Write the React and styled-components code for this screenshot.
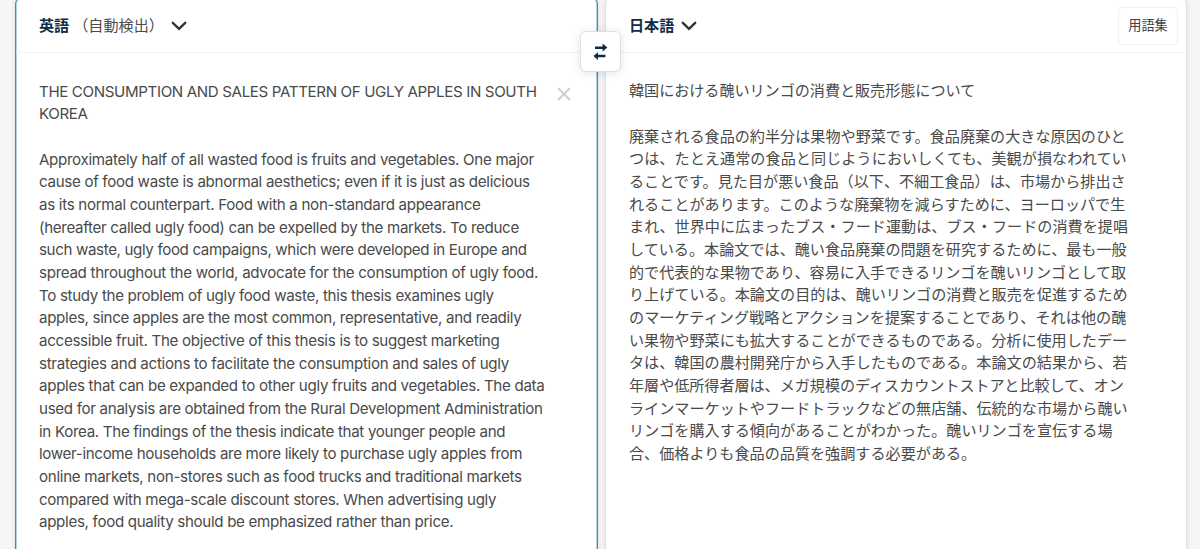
import React from 'react';

import styled, { createGlobalStyle } from "styled-components";

const GlobalStyle = createGlobalStyle`
  * {
    box-sizing: border-box;
  }

  html, body {
    margin: 0;
    height: 549px;
    overflow: hidden;
    background-color: #f6f6f6;
  }

  body {
    font-family: Inter, "Noto Sans CJK JP", sans-serif;
    color: #4a4a4a;
  }
`;

const Translator = styled.main`
  display: grid;
  grid-template-columns: 583px 582px;
  column-gap: 7px;
  height: 570px;
  margin: -4px 0 0 15px;
`;

const Panel = styled.section`
  position: relative;
  background-color: white;
  border: 1px solid ${({ $active }) => ($active ? "#3c8eb3" : "#dae1e8")};
  border-radius: 8px;
  box-shadow: ${({ $active }) => ($active ? "inset 0 0 0 1px rgba(60, 142, 179, 0.4), " : "")}0 1px 5px rgba(0, 43, 81, 0.12);
`;

const PanelHeader = styled.header`
  height: 56px;
  padding: 3px 8px 0 23px;
  display: flex;
  align-items: center;
  border-bottom: 1px solid #f0f1f2;
`;

const LanguageButton = styled.button`
  display: flex;
  align-items: center;
  padding: 0 0 5px;
  border: 0;
  background: transparent;
  font-family: "Noto Sans CJK JP", sans-serif;
  font-size: 15.12px;
  line-height: 22px;
  color: #4a4a4a;
  cursor: pointer;
`;

const LanguageName = styled.strong`
  font-weight: 700;
  color: #0f2b46;
`;

const DetectedLabel = styled.span`
  margin-left: 4px;
`;

const Chevron = styled.svg`
  width: 16px;
  height: 10px;
  margin: 5px 0 0 7px;
`;

const GlossaryButton = styled.button`
  width: 60px;
  height: 38px;
  margin-left: auto;
  padding: 0 0 3px;
  border: 1px solid #f0f1f3;
  border-radius: 3px;
  background-color: white;
  font-family: "Noto Sans CJK JP", sans-serif;
  font-size: 13.2px;
  color: #3a414c;
  cursor: pointer;
`;

const PanelBody = styled.div`
  display: flex;
  align-items: flex-start;
  justify-content: space-between;
  padding: ${({ $japanese }) => ($japanese ? 25.3 : 27.7)}px 26px 0 23px;
`;

const TextBlock = styled.div`
  font-family: ${({ $japanese }) => ($japanese ? '"Noto Sans CJK JP", sans-serif' : 'Inter, sans-serif')};
  font-size: 15.12px;
  line-height: 22.68px;
`;

const Line = styled.div`
  height: 22.68px;
  white-space: nowrap;
  letter-spacing: ${({ $tracking }) => $tracking || 0}px;
`;

const ClearButton = styled.button`
  display: flex;
  margin-top: 6px;
  padding: 0;
  border: 0;
  background: transparent;
  cursor: pointer;
`;

const SwapButton = styled.button`
  position: absolute;
  z-index: 2;
  top: 34px;
  right: -24px;
  width: 41px;
  height: 41px;
  padding: 0;
  display: flex;
  align-items: center;
  justify-content: center;
  border: 1px solid #dae1e8;
  border-radius: 6px;
  background-color: white;
  box-shadow: 0 1px 8px rgba(0, 43, 81, 0.13);
  cursor: pointer;
`;

const sourceLines = [
  ["THE CONSUMPTION AND SALES PATTERN OF UGLY APPLES IN SOUTH", -0.36],
  ["KOREA", -0.355],
  ["", 0],
  ["Approximately half of all wasted food is fruits and vegetables. One major", -0.31],
  ["cause of food waste is abnormal aesthetics; even if it is just as delicious", -0.307],
  ["as its normal counterpart. Food with a non-standard appearance", -0.3],
  ["(hereafter called ugly food) can be expelled by the markets. To reduce", -0.315],
  ["such waste, ugly food campaigns, which were developed in Europe and", -0.355],
  ["spread throughout the world, advocate for the consumption of ugly food.", -0.3],
  ["To study the problem of ugly food waste, this thesis examines ugly", -0.32],
  ["apples, since apples are the most common, representative, and readily", -0.315],
  ["accessible fruit. The objective of this thesis is to suggest marketing", -0.285],
  ["strategies and actions to facilitate the consumption and sales of ugly", -0.28],
  ["apples that can be expanded to other ugly fruits and vegetables. The data", -0.297],
  ["used for analysis are obtained from the Rural Development Administration", -0.305],
  ["in Korea. The findings of the thesis indicate that younger people and", -0.31],
  ["lower-income households are more likely to purchase ugly apples from", -0.33],
  ["online markets, non-stores such as food trucks and traditional markets", -0.295],
  ["compared with mega-scale discount stores. When advertising ugly", -0.32],
  ["apples, food quality should be emphasized rather than price.", -0.31],
];

const targetLines = [
  ["韓国における醜いリンゴの消費と販売形態について", -0.04],
  [""],
  ["廃棄される食品の約半分は果物や野菜です。食品廃棄の大きな原因のひと"],
  ["つは、たとえ通常の食品と同じようにおいしくても、美観が損なわれてい", 0.06],
  ["ることです。見た目が悪い食品（以下、不細工食品）は、市場から排出さ"],
  ["れることがあります。このような廃棄物を減らすために、ヨーロッパで生"],
  ["まれ、世界中に広まったブス・フード運動は、ブス・フードの消費を提唱", 0.03],
  ["している。本論文では、醜い食品廃棄の問題を研究するために、最も一般"],
  ["的で代表的な果物であり、容易に入手できるリンゴを醜いリンゴとして取"],
  ["り上げている。本論文の目的は、醜いリンゴの消費と販売を促進するため"],
  ["のマーケティング戦略とアクションを提案することであり、それは他の醜", 0.06],
  ["い果物や野菜にも拡大することができるものである。分析に使用したデー"],
  ["タは、韓国の農村開発庁から入手したものである。本論文の結果から、若"],
  ["年層や低所得者層は、メガ規模のディスカウントストアと比較して、オン", -0.04],
  ["ラインマーケットやフードトラックなどの無店舗、伝統的な市場から醜い"],
  ["リンゴを購入する傾向があることがわかった。醜いリンゴを宣伝する場"],
  ["合、価格よりも食品の品質を強調する必要がある。"],
];

const ChevronIcon = () => (
  <Chevron viewBox="0 0 16 10" fill="none">
    <path d="M1.8 1.8 8 7.8l6.2-6" stroke="#333" strokeWidth="2.4" strokeLinecap="round" />
  </Chevron>
);

const SourcePanel = () => {
  return (
    <Panel $active>
      <PanelHeader>
        <LanguageButton>
          <LanguageName>英語</LanguageName>
          <DetectedLabel>（自動検出）</DetectedLabel>
          <ChevronIcon />
        </LanguageButton>
      </PanelHeader>

      <PanelBody>
        <TextBlock lang="en">
          {sourceLines.map(([line, tracking], index) => (
            <Line key={index} $tracking={tracking}>{line}</Line>
          ))}
        </TextBlock>
        <ClearButton aria-label="clear">
          <svg width="14" height="14" viewBox="0 0 14 14">
            <path d="M1 1l12 12M13 1 1 13" stroke="#d2d2d2" strokeWidth="2.2" />
          </svg>
        </ClearButton>
      </PanelBody>

      <SwapButton aria-label="swap">
        <svg width="15" height="17" viewBox="0 0 15 17" fill="#0f2b46">
          <path d="M2 3.4h7.6V.4l4.7 4.1-4.7 4V5.9H2zM12.4 11.7H5V9.2L.4 13 5 17v-2.8h7.4z" />
        </svg>
      </SwapButton>
    </Panel>
  );
};

const TargetPanel = () => {
  return (
    <Panel>
      <PanelHeader>
        <LanguageButton>
          <LanguageName>日本語</LanguageName>
          <ChevronIcon />
        </LanguageButton>
        <GlossaryButton>用語集</GlossaryButton>
      </PanelHeader>

      <PanelBody $japanese>
        <TextBlock $japanese lang="ja">
          {targetLines.map(([line, tracking], index) => (
            <Line key={index} $tracking={tracking}>{line}</Line>
          ))}
        </TextBlock>
      </PanelBody>
    </Panel>
  );
};

const App = () => {
  return (
    <>
      <GlobalStyle />
      <Translator>
        <SourcePanel />
        <TargetPanel />
      </Translator>
    </>
  );
};

export default App;
